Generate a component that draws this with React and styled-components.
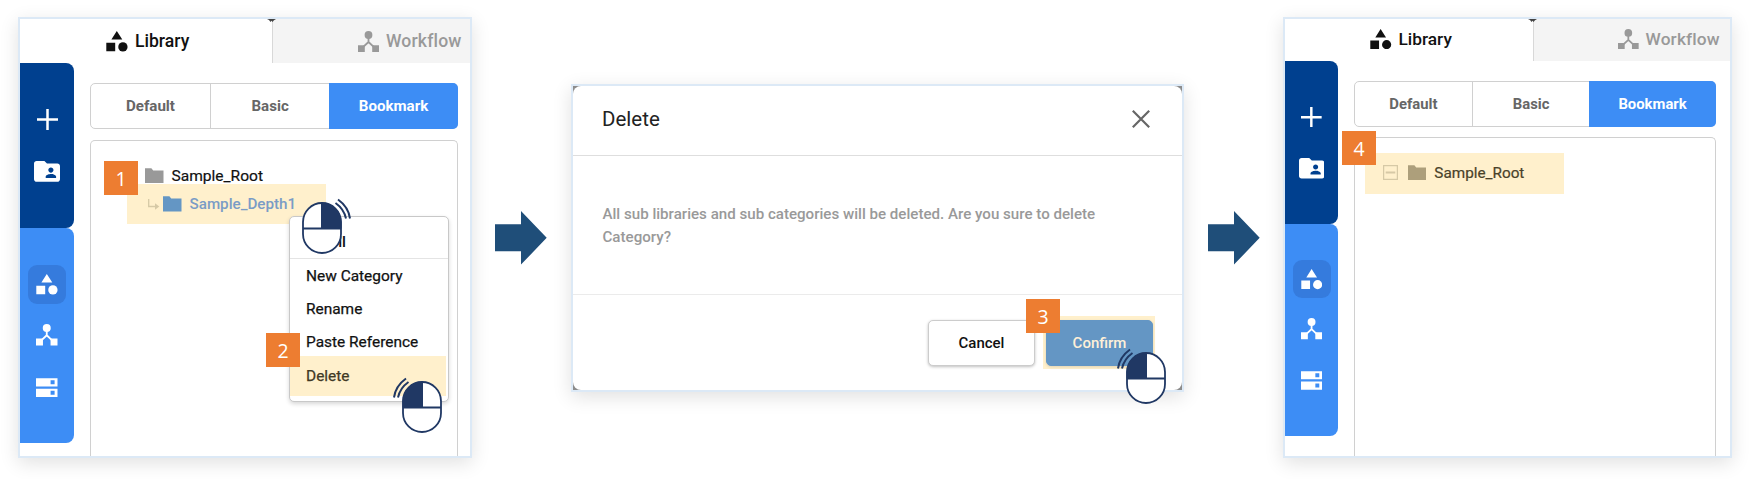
import React from "react";
import styled, { createGlobalStyle, ThemeProvider, css } from "styled-components";

const Global = createGlobalStyle`
  * { box-sizing: border-box; }
  body { margin: 0; background: #fff; font-family: Roboto, "Liberation Sans", sans-serif; }
`;

const k = (n) => ({ theme }) => `${n * theme.scale}px`;

const Page = styled.main`
  position: relative;
  display: flex;
  align-items: flex-start;
  width: 1754px;
  height: 479px;
  padding: 17px 0 0 18px;
  overflow: hidden;
`;

const frame = css`
  border: 2px solid #dce9f6;
  background: #fff;
  box-shadow: 0 5px 18px rgba(0, 0, 0, 0.12);
`;

const Panel = styled.section`
  ${frame}
  position: relative;
  display: flex;
  flex-direction: column;
  flex: none;
  width: ${(p) => p.$width}px;
  height: 441px;
`;

const Tabs = styled.header`
  display: flex;
  flex: none;
  height: ${({ theme }) => theme.tabs}px;
`;

const Tab = styled.div`
  display: flex;
  align-items: center;
  gap: ${k(7)};
  width: ${(p) => p.$width}px;
  padding-left: ${(p) => p.$pad}px;
  padding-bottom: ${({ theme }) => theme.tabLift}px;
  font-size: ${k(17.6)};
  font-weight: 500;
  letter-spacing: ${(p) => (p.$active ? 0 : 0.15)}px;
  color: ${(p) => (p.$active ? "#111" : "#999")};
  background: ${(p) => (p.$active ? "#fff" : "#f4f4f4")};
  border-left: ${(p) => (p.$active ? "0" : "1px solid #d8d8d8")};
`;

const TabNotch = styled.svg`
  position: absolute;
  top: 0;
  left: ${(p) => p.$left}px;
`;

const Body = styled.div`
  display: flex;
  flex: 1;
  min-height: 0;
`;

const Sidebar = styled.nav`
  flex: none;
  width: ${k(54)};
`;

const Rail = styled.div`
  display: flex;
  flex-direction: column;
  align-items: center;
  height: ${(p) => p.$height}px;
  padding-top: ${(p) => p.$top}px;
  background: ${(p) => (p.$dark ? "#00408f" : "#3d8df5")};
  border-radius: 0 8px 8px 0;
`;

const RailItem = styled.div`
  display: flex;
  align-items: center;
  justify-content: center;
  flex: none;
  width: ${k(38.6)};
  height: ${k(38.6)};
  margin-bottom: ${(p) => k(p.$gap || 0)};
  border-radius: 9px;
  color: #fff;
  background: ${(p) => (p.$active ? "#357bdd" : "transparent")};
`;

const Content = styled.div`
  display: flex;
  flex-direction: column;
  flex: none;
  width: ${k(367.7)};
  margin-left: ${k(16)};
  padding-top: 20px;
`;

const Segments = styled.div`
  display: flex;
  flex: none;
  height: 46px;
  border: 1px solid #d0d0d0;
  border-radius: 5px;
`;

const Segment = styled.div`
  display: flex;
  align-items: center;
  justify-content: center;
  flex: ${(p) => (p.$width ? "none" : 1)};
  width: ${(p) => (p.$width ? k(p.$width) : "auto")};
  margin: ${(p) => (p.$active ? "-1px -1px -1px 0" : "0")};
  font-size: ${k(15.1)};
  font-weight: 700;
  color: ${(p) => (p.$active ? "#fff" : "#666")};
  background: ${(p) => (p.$active ? "#3d8df5" : "transparent")};
  border-left: ${(p) => (p.$line ? "1px solid #d0d0d0" : "0")};
  border-radius: ${(p) => (p.$active ? "0 5px 5px 0" : "0")};
`;

const Tree = styled.div`
  flex: 1;
  margin-top: ${({ theme }) => theme.treeGap}px;
  padding-top: ${(p) => p.$top}px;
  border: 1px solid #d0d0d0;
  border-bottom: 0;
  border-radius: 5px 5px 0 0;
`;

const Node = styled.div`
  display: flex;
  align-items: center;
  width: ${(p) => p.$width || "auto"};
  height: ${(p) => p.$height}px;
  margin-left: ${(p) => p.$indent}px;
  padding-left: ${(p) => p.$pad || 0}px;
  padding-bottom: ${(p) => p.$lift || 0}px;
  font-size: ${(p) => k(p.$bold ? 15.2 : 15.55)};
  font-weight: ${(p) => (p.$bold ? 500 : 400)};
  -webkit-text-stroke: ${(p) => (p.$bold ? 0 : "0.2px")};
  color: ${(p) => p.$color};
  background: ${(p) => (p.$marked ? "#fff0cc" : "transparent")};

  svg { flex: none; margin-right: ${(p) => p.$gap || 8}px; }
  svg + svg { margin-right: 8px; }
`;

const Menu = styled.div`
  position: absolute;
  left: 269px;
  top: 197px;
  width: 160px;
  height: 186px;
  background: #fff;
  border: 1px solid #c8c8c8;
  border-radius: 5px;
  box-shadow: 0 2px 4px rgba(0, 0, 0, 0.16);
`;

const MenuHead = styled.div`
  display: flex;
  align-items: center;
  justify-content: flex-end;
  height: 42px;
  padding: 9px 102px 0 0;
  border-bottom: 1px solid #e4e4e4;
  font-size: 15.4px;
  font-weight: 500;
  color: #111;
`;

const MenuItem = styled.div`
  display: flex;
  align-items: center;
  height: ${(p) => (p.$marked ? 40 : 33.4)}px;
  margin: ${(p) => (p.$marked ? "-3px 2px 0 0" : "0")};
  padding-left: 16px;
  font-size: 15.45px;
  -webkit-text-stroke: 0.25px;
  color: ${(p) => (p.$marked ? "#3f3925" : "#111")};
  background: ${(p) => (p.$marked ? "#fff0cc" : "transparent")};
`;

const Badge = styled.div`
  position: absolute;
  left: ${(p) => p.$x}px;
  top: ${(p) => p.$y}px;
  display: flex;
  align-items: center;
  justify-content: center;
  width: 34px;
  height: 34px;
  background: #ed7d31;
  color: #fff;
  font: 400 19.5px "Open Sans", "Noto Sans", sans-serif;
`;

const Pointer = styled.svg`
  position: absolute;
  left: ${(p) => p.$x}px;
  top: ${(p) => p.$y}px;
  overflow: visible;
`;

const ArrowSlot = styled.div`
  flex: none;
  margin: 194px ${(p) => p.$after}px 0 ${(p) => p.$before}px;
  width: 52px;
  height: 54px;
  svg { display: block; }
`;

const Dialog = styled.section`
  ${frame}
  flex: none;
  width: 613px;
  height: 308px;
  margin-top: 67px;
  background: #8c8c8c;
`;

const DialogCard = styled.div`
  display: flex;
  flex-direction: column;
  height: 100%;
  background: #fff;
  border-radius: 8px;
`;

const DialogHeader = styled.div`
  display: flex;
  align-items: center;
  justify-content: space-between;
  height: 70px;
  padding: 0 32px 4px 29px;
  border-bottom: 1px solid #dedede;
  font-size: 20.5px;
  color: #222;

  svg { margin-top: 1px; }
`;

const Message = styled.p`
  flex: none;
  height: 139px;
  margin: 0;
  padding: 47px 70px 0 29.5px;
  border-bottom: 1px solid #ebebeb;
  font-size: 15.12px;
  font-weight: 500;
  line-height: 23px;
  color: #999;
`;

const DialogFooter = styled.div`
  display: flex;
  align-items: flex-start;
  justify-content: flex-end;
  gap: 8px;
  padding: 25px 27px 0 0;
`;

const Button = styled.button`
  display: block;
  width: 107px;
  height: 46px;
  padding: 0;
  border: 1px solid ${(p) => (p.$primary ? "#6496c4" : "#ccc")};
  border-radius: 5px;
  background: ${(p) => (p.$primary ? "#6496c4" : "#fff")};
  color: ${(p) => (p.$primary ? "#fff0d8" : "#111")};
  font: 500 15px Roboto, sans-serif;
  box-shadow: 0 1px 3px rgba(0, 0, 0, ${(p) => (p.$primary ? 0.12 : 0.25)});
`;

const Highlight = styled.div`
  margin-top: -4px;
  height: 53px;
  padding: 4px 2px 3px 3px;
  background: #fff0cc;
`;

const Shapes = ({ size = 22 }) => (
  <svg width={size} height={size * 21 / 22} viewBox="0 0 22 21" fill="currentColor">
    <path d="M10.8 0 16.3 8.6H5.4zM.3 11.7h8.9v8.6H.3z" />
    <circle cx="16.9" cy="15.9" r="4.65" />
  </svg>
);

const Network = ({ size = 21.5 }) => (
  <svg width={size} height={size} viewBox="0 0 21 21" fill="currentColor">
    <circle cx="10.5" cy="4" r="3.9" />
    <path d="M0 14.2h6.8V21H0zM14.2 14.2H21V21h-6.8z" />
    <path d="M10.5 6v5L5 16.2M10.5 11l5.5 5.2" fill="none" stroke="currentColor" strokeWidth="1.8" />
  </svg>
);

const Servers = ({ size = 21.5 }) => (
  <svg width={size} height={size * 19 / 21.5} viewBox="0 0 21.5 19" fill="currentColor" fillRule="evenodd">
    <path d="M0 .2h21.5v8.3H0zM14.6 2.3v4h4v-4zM0 10.7h21.5V19H0zM14.6 12.8v4h4v-4z" />
  </svg>
);

const Plus = ({ size = 21 }) => (
  <svg width={size} height={size} viewBox="0 0 21 21">
    <path d="M10.5 0v21M0 10.5h21" stroke="currentColor" strokeWidth="2.5" />
  </svg>
);

const SharedFolder = ({ size = 26 }) => (
  <svg width={size} height={size * 0.8} viewBox="2 4 20 16" fill="currentColor">
    <path d="M20 6h-8l-2-2H4c-1.1 0-1.99.9-1.99 2L2 18c0 1.1.9 2 2 2h16c1.1 0 2-.9 2-2V8c0-1.1-.9-2-2-2zm-5 3c1.1 0 2 .9 2 2s-.9 2-2 2-2-.9-2-2 .9-2 2-2zm4 8h-8v-1c0-1.33 2.67-2 4-2s4 .67 4 2v1z" />
  </svg>
);

const Folder = ({ color }) => (
  <svg width="18.5" height="15.5" viewBox="0 0 18.5 15.5" fill={color}>
    <path d="M0 .3h6.4l1.8 2.2h10.3v13H0z" />
  </svg>
);

const Branch = () => (
  <svg width="12" height="12" viewBox="0 0 12 12">
    <path d="M.7 1v7.5H8" fill="none" stroke="#d6c9a6" strokeWidth="1.3" />
    <path d="M7 5.3 11.3 8.5 7 11.7z" fill="#d6c9a6" />
  </svg>
);

const Collapse = () => (
  <svg width="15" height="15" viewBox="0 0 15 15" fill="none" stroke="#d6c9a6">
    <path d="M.6.6h13.8v13.8H.6z" strokeWidth="1.3" />
    <path d="M2.7 7.5h9.6" strokeWidth="2" />
  </svg>
);

const Arrow = ({ before, after }) => (
  <ArrowSlot $before={before} $after={after}>
    <svg width="52" height="54" viewBox="0 0 52 54">
      <path d="M0 13.3h26V0l25.7 26.8L26 53.6V40.3H0z" fill="#1f4e79" />
    </svg>
  </ArrowSlot>
);

const Mouse = ({ x, y, right }) => (
  <Pointer $x={x} $y={y} width="40" height="52" viewBox="0 0 40 52">
    <g transform={right ? "translate(40 0) scale(-1 1)" : undefined} stroke="#203864" fill="none">
      <rect x="1" y="1" width="38" height="50" rx="19" fill="#fff" strokeWidth="1.8" />
      <path d="M20.5 1A19.3 19.3 0 0 0 1 20v6.5h19.5z" fill="#203864" />
      <path d="M1 26.5h38" strokeWidth="2.2" />
      <path d="M4-2.5Q-6.5 5-8 16.5M6.5 1Q-2 7-4 16.5" strokeWidth="2" />
    </g>
  </Pointer>
);

const LibraryPanel = ({ metrics, width, tabWidth, libPad, flowPad, tree, overlay }) => (
  <ThemeProvider theme={metrics}>
    <Panel $width={width}>
      <Tabs>
        <Tab $active $width={tabWidth} $pad={libPad}><Shapes size={22 * metrics.scale} />Library</Tab>
        <Tab $width={width - 4 - tabWidth} $pad={flowPad}><Network size={21 * metrics.scale} />Workflow</Tab>
      </Tabs>
      <TabNotch $left={tabWidth - 5} width="9" height="3" viewBox="0 0 9 3">
        <path d="M0 0h9L7 1.2 5.5 3 4.5 1.8 3.5 3 2 1z" fill="#444" />
      </TabNotch>
      <Body>
        <Sidebar>
          <Rail $dark $height={metrics.dark} $top={metrics.darkTop}>
            <RailItem $gap={13.6}><Plus size={21 * metrics.scale} /></RailItem>
            <RailItem><SharedFolder size={26 * metrics.scale} /></RailItem>
          </Rail>
          <Rail $height={metrics.light} $top={metrics.lightTop}>
            <RailItem $active $gap={12}><Shapes size={22 * metrics.scale} /></RailItem>
            <RailItem $gap={14}><Network size={21.5 * metrics.scale} /></RailItem>
            <RailItem><Servers size={21.5 * metrics.scale} /></RailItem>
          </Rail>
        </Sidebar>
        <Content>
          <Segments>
            <Segment $width={118.9}>Default</Segment>
            <Segment $line $width={119.5}>Basic</Segment>
            <Segment $active>Bookmark</Segment>
          </Segments>
          {tree}
        </Content>
      </Body>
      {overlay}
    </Panel>
  </ThemeProvider>
);

const before = { scale: 1, tabs: 44, tabLift: 0, dark: 165, darkTop: 37, light: 215, lightTop: 37, treeGap: 11 };
const after = { scale: 0.984, tabs: 42, tabLift: 2, dark: 162.5, darkTop: 37, light: 212, lightTop: 36.7, treeGap: 10 };

export default function App() {
  return (
    <>
      <Global />
      <Page>
        <LibraryPanel
          metrics={before}
          width={454}
          tabWidth={252}
          libPad={86}
          flowPad={85}
          tree={
            <Tree $top={26}>
              <Node $height={17} $indent={54} $color="#111"><Folder color="#999" />Sample_Root</Node>
              <Node $marked $bold $width="199px" $height={40} $indent={36} $pad={21} $gap={3} $color="#7a9cc6">
                <Branch /><Folder color="#6496c4" />Sample_Depth1
              </Node>
            </Tree>
          }
          overlay={
            <>
              <Menu>
                <MenuHead>ll</MenuHead>
                <MenuItem>New Category</MenuItem>
                <MenuItem>Rename</MenuItem>
                <MenuItem>Paste Reference</MenuItem>
                <MenuItem $marked>Delete</MenuItem>
              </Menu>
              <Badge $x={84} $y={142}>1</Badge>
              <Badge $x={246} $y={314}>2</Badge>
              <Mouse right x={282} y={183} />
              <Mouse x={382} y={361.5} />
            </>
          }
        />
        <Arrow before={23} after={24} />
        <Dialog>
          <DialogCard>
            <DialogHeader>
              Delete
              <svg width="18" height="18" viewBox="0 0 18 18">
                <path d="M.8.8 17.2 17.2M17.2.8.8 17.2" stroke="#666" strokeWidth="2.2" />
              </svg>
            </DialogHeader>
            <Message>All sub libraries and sub categories will be deleted. Are you sure to delete Category?</Message>
            <DialogFooter>
              <Button>Cancel</Button>
              <Highlight><Button $primary>Confirm</Button></Highlight>
            </DialogFooter>
          </DialogCard>
        </Dialog>
        <Arrow before={24} after={23} />
        <LibraryPanel
          metrics={after}
          width={449}
          tabWidth={248}
          libPad={85}
          flowPad={84}
          tree={
            <Tree $top={15}>
              <Node $marked $width="199px" $height={41} $indent={10} $pad={18} $gap={10} $lift={2} $color="#4a4229">
                <Collapse /><Folder color="#ad9f7b" />Sample_Root
              </Node>
            </Tree>
          }
          overlay={<Badge $x={57} $y={112}>4</Badge>}
        />
        <Badge $x={1026} $y={299}>3</Badge>
        <Mouse x={1125.7} y={351.5} />
      </Page>
    </>
  );
}
